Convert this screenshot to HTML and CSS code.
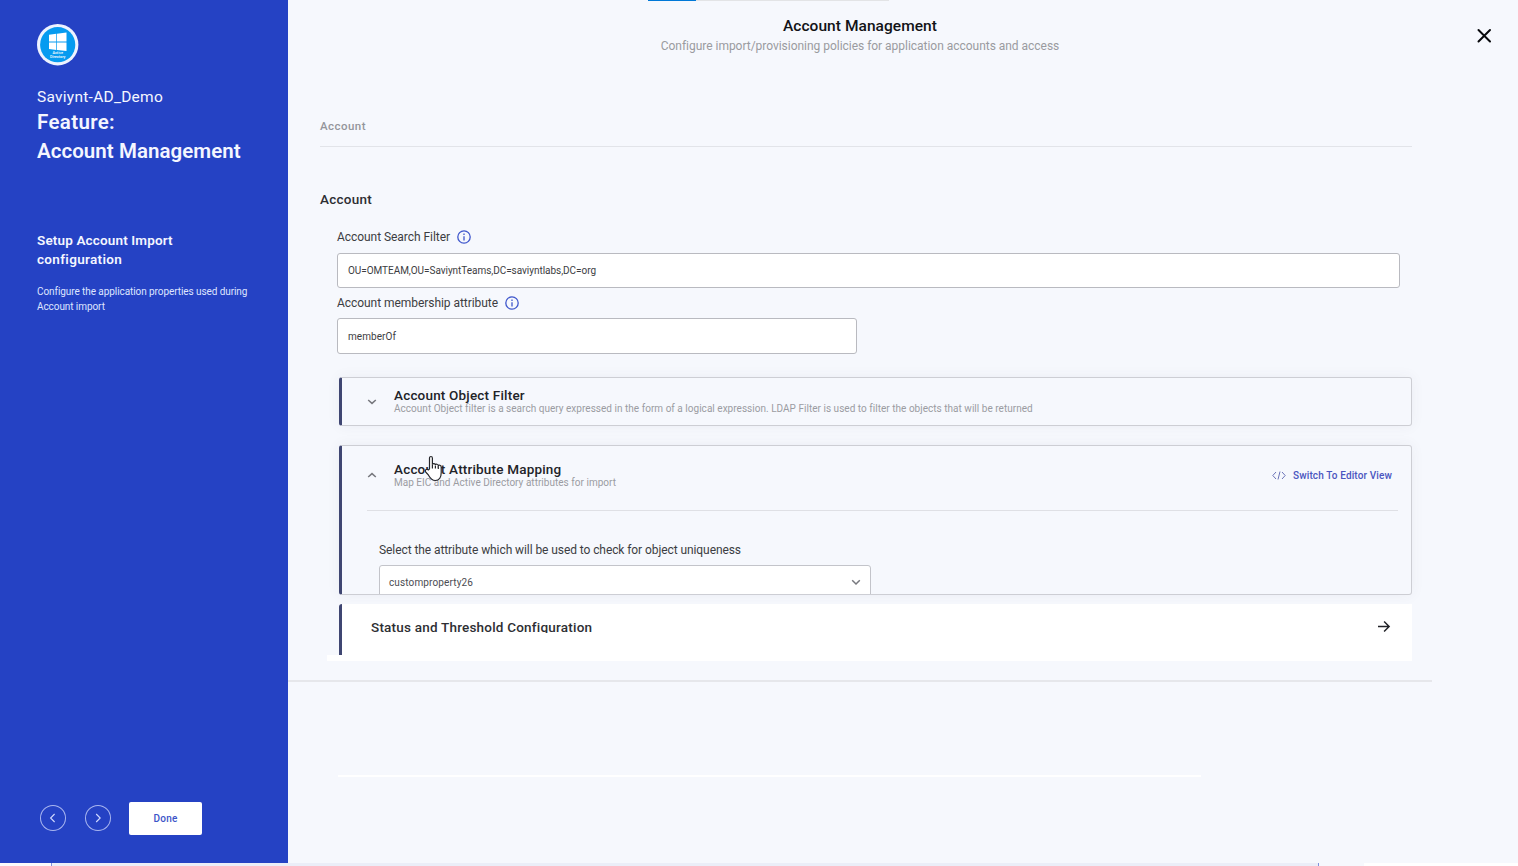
FILE: index.html
```
<!DOCTYPE html>
<html lang="en">
<head>
    <meta charset="UTF-8">
    <meta name="viewport" content="width=device-width, initial-scale=1.0">
    <title>Account Management</title>
    <link rel="stylesheet" href="styles.css">
</head>
<body>
    <div class="wizard">
        <aside class="sidebar">
            <svg class="app-logo" width="42" height="42" viewBox="0 0 42 42">
                <circle cx="20.7" cy="20.7" r="20.7" fill="#eef3ff"/>
                <circle cx="20.7" cy="20.7" r="17.6" fill="#069bf0"/>
                <path d="M12 10.8l7.3-1v7.8H12zM20 9.7l9.5-1.3v9.2H20zM12 18.4h7.3v7.7l-7.3-1zM20 18.4h9.500v8.700L20 26.100z" fill="#fff"/>
                <text x="20.700" y="30.300" class="logo-text">Active</text>
                <text x="20.700" y="34" class="logo-text">Directory</text>
            </svg>
            <div class="app-name">Saviynt-AD_Demo</div>
            <h1><span class="feature-word">Feature:</span><br>Account Management</h1>
            <h2>Setup Account Import <span class="second-line">configuration</span></h2>
            <p class="step-text">Configure the application properties used during Account import</p>
            <div class="sidebar-nav">
                <button class="round-btn">
                    <svg width="26" height="26" viewBox="0 0 26 26"><path d="M14.600 9l-4 4 4 4"/></svg>
                </button>
                <button class="round-btn">
                    <svg width="26" height="26" viewBox="0 0 26 26"><path d="M11.200 9l4 4-4 4"/></svg>
                </button>
                <button class="done-btn">Done</button>
            </div>
        </aside>

        <main class="main">
            <div class="content">
                <div class="progress"><div class="progress-fill"></div></div>
                <header class="page-header">
                    <div class="page-title">Account Management</div>
                    <div class="page-subtitle">Configure import/provisioning policies for application accounts and access</div>
                </header>
                <div class="tabs">Account</div>

                <section class="form">
                    <h3>Account</h3>
                    <div class="fields">
                        <div class="field-label">Account Search Filter
                            <svg class="info" width="14" height="14" viewBox="0 0 14 14"><circle cx="7" cy="7" r="6.200"/><path d="M7 6.200v4.200M7 3.600v1.300"/></svg>
                        </div>
                        <div class="input search-filter">OU=OMTEAM,OU=SaviyntTeams,DC=saviyntlabs,DC=org</div>
                        <div class="field-label">Account membership attribute
                            <svg class="info" width="14" height="14" viewBox="0 0 14 14"><circle cx="7" cy="7" r="6.200"/><path d="M7 6.200v4.200M7 3.600v1.300"/></svg>
                        </div>
                        <div class="input membership">memberOf</div>
                    </div>

                    <div class="card">
                        <div class="card-head">
                            <svg class="chevron" width="10" height="8" viewBox="0 0 10 8"><path d="M1.200 2l3.800 3.400L8.800 2"/></svg>
                            <div class="card-titles">
                                <div class="card-title">Account Object Filter</div>
                                <div class="card-desc">Account Object filter is a search query expressed in the form of a logical expression. LDAP Filter is used to filter the objects that will be returned</div>
                            </div>
                        </div>
                    </div>

                    <div class="card card-open">
                        <div class="card-head">
                            <svg class="chevron" width="10" height="8" viewBox="0 0 10 8"><path d="M1.200 5l3.800-3.400L8.800 5"/></svg>
                            <div class="card-titles">
                                <div class="card-title">Account Attribute Mapping</div>
                                <div class="card-desc">Map EIC and Active Directory attributes for import</div>
                            </div>
                            <a class="editor-link">
                                <svg width="14" height="10" viewBox="0 0 14 10"><path d="M4 1L.8 4.500 4 8M10 1l3.200 3.500L10 8M8 .5l-2 8"/></svg>
                                Switch To Editor View
                            </a>
                        </div>
                        <div class="card-body">
                            <div class="select-label">Select the attribute which will be used to check for object uniqueness</div>
                            <div class="select">
                                <span>customproperty26</span>
                                <svg class="chevron" width="10" height="8" viewBox="0 0 10 8"><path d="M1.200 1.200L5 5l3.800-3.800"/></svg>
                            </div>
                        </div>
                    </div>

                    <div class="status-card">
                        <div class="status-title">Status and Threshold Configuration</div>
                        <svg width="14" height="14" viewBox="0 0 14 14"><path d="M1 6.500h11M7.100 1.500l5 5-5 5"/></svg>
                    </div>
                    <div class="status-base"></div>
                </section>
                <div class="divider"></div>
                <div class="white-line"></div>
            </div>
            <button class="close-btn">
                <svg width="16" height="16" viewBox="0 0 16 16"><path d="M2.500 2l11.500 11.500M14 2L2.500 13.500"/></svg>
            </button>
        </main>
    </div>
    <div class="page-edge">
        <div class="edge-left"></div>
        <div class="edge-middle"></div>
        <div class="edge-gap"></div>
        <div class="edge-right"></div>
    </div>

    <svg class="cursor" width="20" height="27" viewBox="0 0 20 27">
        <path d="M5.500 14V3.200c0-2.300 2.900-2.300 2.900 0V9.500c.3-1.400 2.900-1.300 3 .4.400-1.200 2.800-.9 2.900.8.500-1 2.900-.6 2.900 1.300v5.800c0 4.200-1.800 7.700-5.900 7.700-3.600 0-5.200-2.500-6.800-5.300L1.600 16.800c-1-1.900 1.400-3.300 2.700-1.900z"/>
        <path d="M8.400 9.500v4M11.400 10.500v3M14.300 11.300v2.700"/>
    </svg>
</body>
</html>
```
FILE: styles.css
```
* {
    margin: 0;
    padding: 0;
    box-sizing: border-box;
}

body {
    font-family: Roboto, "Open Sans", sans-serif;
    background: #f6f8fd;
    color: #2d2e33;
    height: 866px;
    overflow: hidden;
}

button {
    background: none;
    border: none;
    font-family: inherit;
    cursor: pointer;
}

svg {
    display: block;
    fill: none;
    flex-shrink: 0;
}

.wizard {
    display: flex;
    height: 863px;
}

/* Sidebar */
.sidebar {
    width: 288px;
    background: #2542c4;
    color: #f4f6ff;
    padding: 24px 37px 28px;
    display: flex;
    flex-direction: column;
}

.logo-text {
    font-size: 3.8px;
    font-weight: 500;
    fill: #fff;
    text-anchor: middle;
}

.app-name {
    margin-top: 21px;
    font-size: 15.5px;
    line-height: 20px;
    letter-spacing: 0.26px;
}

h1 {
    margin-top: 1px;
    font-size: 20.5px;
    font-weight: 600;
    line-height: 29px;
    letter-spacing: 0.05px;
    white-space: nowrap;
}

.feature-word {
    letter-spacing: 0.35px;
}

h2 {
    margin-top: 65px;
    font-size: 13.5px;
    font-weight: 600;
    line-height: 19px;
    letter-spacing: 0.15px;
    white-space: nowrap;
}

.second-line {
    display: block;
    letter-spacing: 0.33px;
}

.step-text {
    margin-top: 16px;
    font-size: 10px;
    line-height: 14.5px;
    letter-spacing: -0.077px;
    color: #dfe5ff;
}

.sidebar-nav {
    margin-top: auto;
    margin-left: 3px;
    display: flex;
    align-items: center;
}

.round-btn {
    width: 26px;
    height: 26px;
    margin: 0 19px 2px 0;
    border-radius: 50%;
    box-shadow: inset 0 0 0 1px #a9b6f0;
}

.round-btn svg {
    stroke: #d3dbff;
    stroke-width: 1.1;
}

.done-btn {
    width: 73px;
    height: 33px;
    margin-left: -1px;
    background: #fff;
    border-radius: 2px;
    color: #3b54c8;
    font-size: 10px;
    font-weight: 500;
    letter-spacing: 0.22px;
}

/* Main area */
.main {
    flex: 1;
    display: flex;
    justify-content: space-between;
}

.content {
    width: 1144px;
}

.progress {
    width: 241px;
    height: 1px;
    margin-left: 360px;
    background: #e3e4e6;
}

.progress-fill {
    width: 48px;
    height: 1px;
    background: #0078d7;
}

.page-header {
    padding-top: 15px;
    text-align: center;
}

.page-title {
    font-size: 15.5px;
    font-weight: 500;
    line-height: 20px;
    letter-spacing: 0.05px;
    color: #121317;
}

.page-subtitle {
    font-size: 12px;
    line-height: 20px;
    letter-spacing: -0.027px;
    color: #9a9ba0;
}

.tabs {
    margin: 60px 20px 0 32px;
    height: 31px;
    border-bottom: 1px solid #e2e4e9;
    font-size: 11.5px;
    font-weight: 500;
    line-height: 20px;
    letter-spacing: 0.45px;
    color: #94959b;
}

.form {
    padding: 42px 20px 0 32px;
}

h3 {
    font-size: 13.5px;
    font-weight: 500;
    line-height: 20px;
    letter-spacing: 0.25px;
}

.fields {
    padding: 18px 12px 0 17px;
}

.field-label {
    display: flex;
    align-items: center;
    gap: 7px;
    height: 20px;
    font-size: 12px;
    letter-spacing: -0.05px;
    color: #3c3d42;
}

.info {
    stroke: #3f57cc;
    stroke-width: 1.3;
}

.input {
    background: #fff;
    border: 1px solid #b9bac0;
    border-radius: 3px;
    padding: 0 10px;
    font-size: 10px;
    color: #3c3d42;
}

.search-filter {
    height: 35px;
    line-height: 34px;
    margin: 6px 0 5px;
    letter-spacing: -0.042px;
}

.membership {
    width: 520px;
    height: 36px;
    line-height: 35px;
    margin-top: 5px;
    letter-spacing: 0.06px;
}

.card {
    margin: 23px 0 0 19px;
    border: 1px solid #cdced4;
    border-left: 3px solid #3f4672;
    border-radius: 3px;
    box-shadow: 0 0 14px rgba(60, 64, 90, 0.06);
    height: 49px;
    overflow: hidden;
}

.card-head {
    display: flex;
    align-items: center;
    height: 47px;
    padding: 0 19px 0 25px;
}

.chevron {
    stroke: #77787e;
    stroke-width: 1.5;
}

.card-titles {
    flex: 1;
    margin-left: 17px;
    padding-top: 1px;
}

.card-title {
    padding-bottom: 2px;
    font-size: 13.5px;
    font-weight: 500;
    line-height: 12px;
    letter-spacing: 0.19px;
    color: #222328;
}

.card-desc {
    font-size: 10px;
    line-height: 12px;
    letter-spacing: 0.025px;
    color: #9b9ca2;
}

.card-open {
    height: 150px;
    margin-top: 19px;
}

.card-open .card-head {
    height: 65px;
    margin: 0 13px 0 25px;
    padding: 0 6px 5px 0;
    border-bottom: 1px solid #dfe0e5;
}

.editor-link {
    display: flex;
    align-items: center;
    gap: 7px;
    font-size: 10px;
    font-weight: 500;
    letter-spacing: 0.124px;
    color: #4a55c0;
}

.editor-link svg {
    stroke: #6c74b8;
    stroke-width: 1;
}

.card-body {
    padding: 29px 37px 0;
}

.select-label {
    font-size: 12px;
    line-height: 20px;
    letter-spacing: -0.08px;
    color: #3c3d42;
}

.select {
    display: flex;
    align-items: center;
    justify-content: space-between;
    width: 492px;
    height: 35px;
    margin-top: 5px;
    padding: 0 9px;
    background: #fff;
    border: 1px solid #c3c4ca;
    border-radius: 3px;
    font-size: 10px;
    letter-spacing: 0.127px;
    color: #4b4c52;
}

.status-card {
    display: flex;
    justify-content: space-between;
    height: 51px;
    margin: 9px 0 0 19px;
    padding: 16px 21px 0 29px;
    background: #fff;
    border-left: 3px solid #3f4672;
    border-radius: 3px 0 0 0;
}

.status-title {
    height: 13px;
    overflow: hidden;
    font-size: 13.5px;
    font-weight: 500;
    line-height: 15px;
    letter-spacing: 0.21px;
}

.status-card svg {
    stroke: #222328;
    stroke-width: 1.5;
}

.status-base {
    height: 6px;
    margin-left: 7px;
    background: #fff;
}

.divider {
    height: 2px;
    margin-top: 19px;
    background: #e6e7eb;
}

.white-line {
    width: 863px;
    height: 2px;
    margin: 93px 0 0 50px;
    background: #fff;
}

.close-btn {
    width: 16px;
    height: 16px;
    margin: 28px 26px 0 0;
}

.close-btn svg {
    stroke: #08090c;
    stroke-width: 2;
    stroke-linecap: round;
}

/* Edge of the page under the wizard */
.page-edge {
    display: flex;
    height: 3px;
}

.edge-left {
    width: 51px;
    background: #fafafc;
}

.edge-middle {
    width: 1268px;
    background: #ebeef8;
    border: solid #8090dc;
    border-width: 0 1px;
}

.edge-gap {
    width: 45px;
}

.edge-right {
    flex: 1;
    background: #fff;
}

.cursor {
    position: absolute;
    left: 424px;
    top: 455px;
    fill: #fff;
    stroke: #25262b;
    stroke-width: 1.2;
}
```
